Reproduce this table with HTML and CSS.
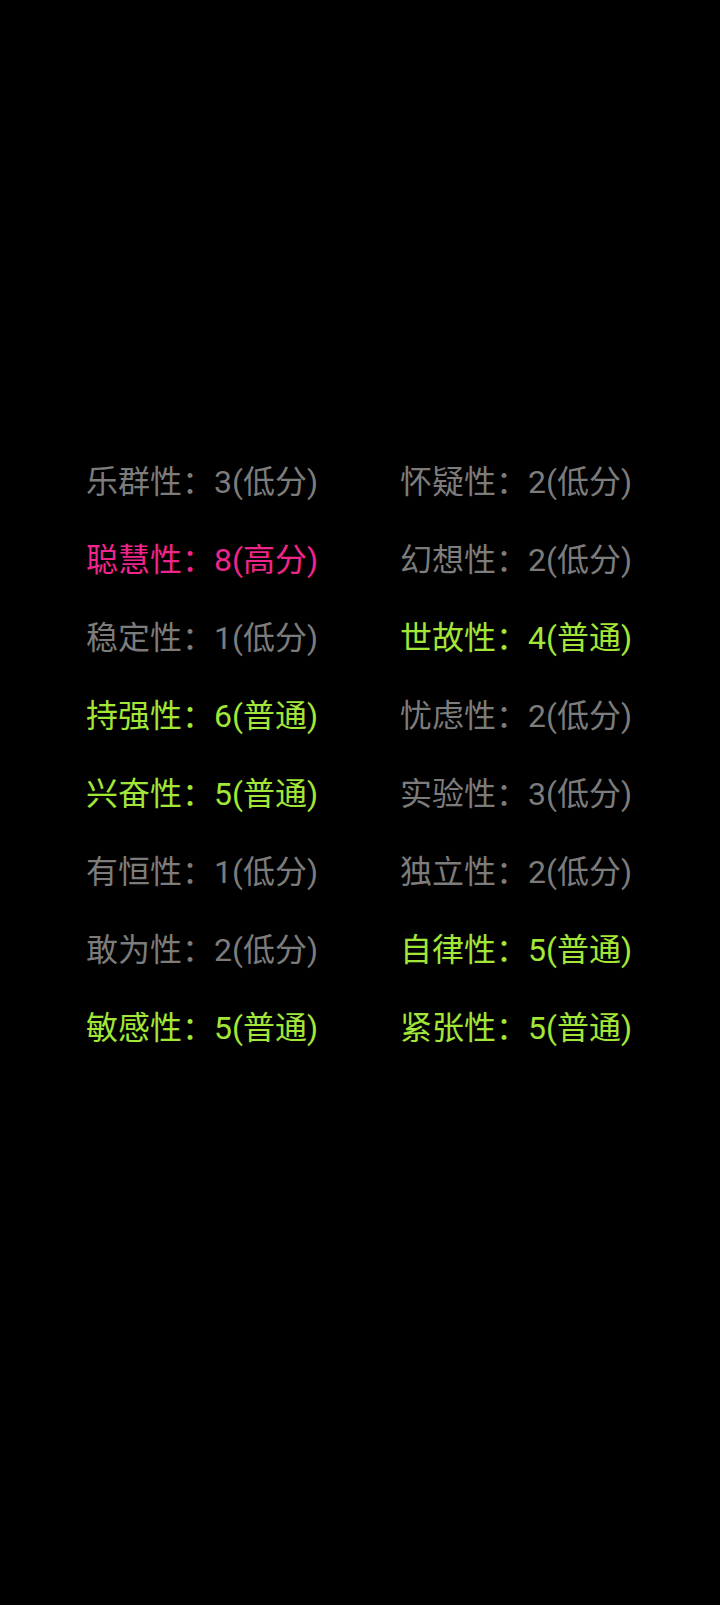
FILE: index.html
```html
<!DOCTYPE html>
<html lang="zh-CN">
<head>
<meta charset="utf-8">
<link rel="stylesheet" href="styles.css">
</head>
<body>
<div class="grid">
  <div class="item low">乐群性：3(低分)</div>
  <div class="item low">怀疑性：2(低分)</div>
  <div class="item high">聪慧性：8(高分)</div>
  <div class="item low">幻想性：2(低分)</div>
  <div class="item low">稳定性：1(低分)</div>
  <div class="item mid">世故性：4(普通)</div>
  <div class="item mid">持强性：6(普通)</div>
  <div class="item low">忧虑性：2(低分)</div>
  <div class="item mid">兴奋性：5(普通)</div>
  <div class="item low">实验性：3(低分)</div>
  <div class="item low">有恒性：1(低分)</div>
  <div class="item low">独立性：2(低分)</div>
  <div class="item low">敢为性：2(低分)</div>
  <div class="item mid">自律性：5(普通)</div>
  <div class="item mid">敏感性：5(普通)</div>
  <div class="item mid">紧张性：5(普通)</div>
</div>
</body>
</html>
```
FILE: styles.css
```css
html, body {
  margin: 0;
  padding: 0;
  background: #000;
}
body {
  width: 720px;
  height: 1605px;
  font-family: Roboto, "Noto Sans CJK SC", sans-serif;
}
.grid {
  display: grid;
  grid-template-columns: 314px 314px;
  grid-auto-rows: 78px;
  padding: 443px 0 0 86px;
}
.item {
  font-size: 32px;
  line-height: 78px;
  white-space: nowrap;
}
.low {
  color: #7c7c7c;
}
.high {
  color: #f0258c;
}
.mid {
  color: #a2e637;
}
```
